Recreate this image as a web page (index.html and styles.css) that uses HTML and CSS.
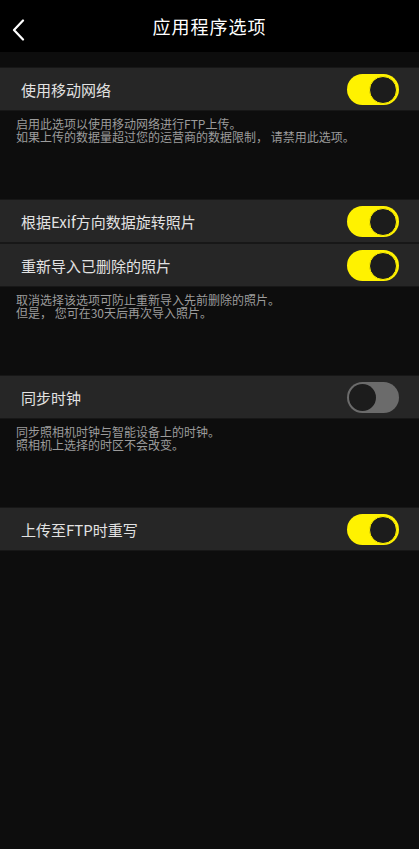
FILE: index.html
```html
<!DOCTYPE html>
<html>
<head>
  <meta charset="UTF-8">
  <title>应用程序选项</title>
  <link rel="stylesheet" href="styles.css">
</head>
<body>
  <div class="header">
    <span class="back">
      <svg width="14" height="22" viewBox="0 0 14 22"><path d="M12 1.5 L3 11 L12 20.5" fill="none" stroke="#fff" stroke-width="2.2" stroke-linecap="round" stroke-linejoin="round"/></svg>
    </span>
    <h1>应用程序选项</h1>
  </div>

  <div class="list">
    <div class="group">
      <div class="row"><span>使用移动网络</span><div class="toggle on"><i></i></div></div>
      <div class="desc"><p>启用此选项以使用移动网络进行FTP上传。</p><p>如果上传的数据量超过您的运营商的数据限制， 请禁用此选项。</p></div>
    </div>
    <div class="group">
      <div class="row"><span>根据Exif方向数据旋转照片</span><div class="toggle on"><i></i></div></div>
      <div class="row"><span>重新导入已删除的照片</span><div class="toggle on"><i></i></div></div>
      <div class="desc"><p>取消选择该选项可防止重新导入先前删除的照片。</p><p>但是， 您可在30天后再次导入照片。</p></div>
    </div>
    <div class="group">
      <div class="row"><span>同步时钟</span><div class="toggle"><i></i></div></div>
      <div class="desc"><p>同步照相机时钟与智能设备上的时钟。</p><p>照相机上选择的时区不会改变。</p></div>
    </div>
    <div class="group">
      <div class="row"><span>上传至FTP时重写</span><div class="toggle on"><i></i></div></div>
    </div>
  </div>
</body>
</html>
```
FILE: styles.css
```css
body {margin:0;background:#0d0d0d;color:#eee;font-family:"Noto Sans CJK SC","Liberation Sans",sans-serif;height:849px;}
.header {height:52px;background:#000;display:flex;align-items:center;justify-content:center;position:relative;}
.header h1 {margin:0;font-size:18px;font-weight:400;color:#fff;letter-spacing:1px;}
.back {position:absolute;left:11px;top:19px;}
.list {padding-top:15px;}
.row {height:42px;background:#262626;border-top:1px solid #171717;border-bottom:1px solid #171717;
  display:flex;align-items:center;justify-content:space-between;padding:0 20px 0 21px;font-size:15px;color:#e2e2e2;}
.desc {padding:6px 16px 56px;font-size:12px;color:#9c9c9c;}
.desc p {margin:0;height:13px;line-height:13px;}
.toggle {width:52px;height:31px;border-radius:16px;background:#6b6b6b;position:relative;box-sizing:border-box;}
.toggle i {position:absolute;left:2px;top:2px;width:27px;height:27px;border-radius:50%;background:#1c1c1c;}
.toggle.on {background:#fff200;}
.toggle.on i {left:auto;right:2px;width:26px;height:26px;top:2px;border:0.5px solid #fff200;}
```
